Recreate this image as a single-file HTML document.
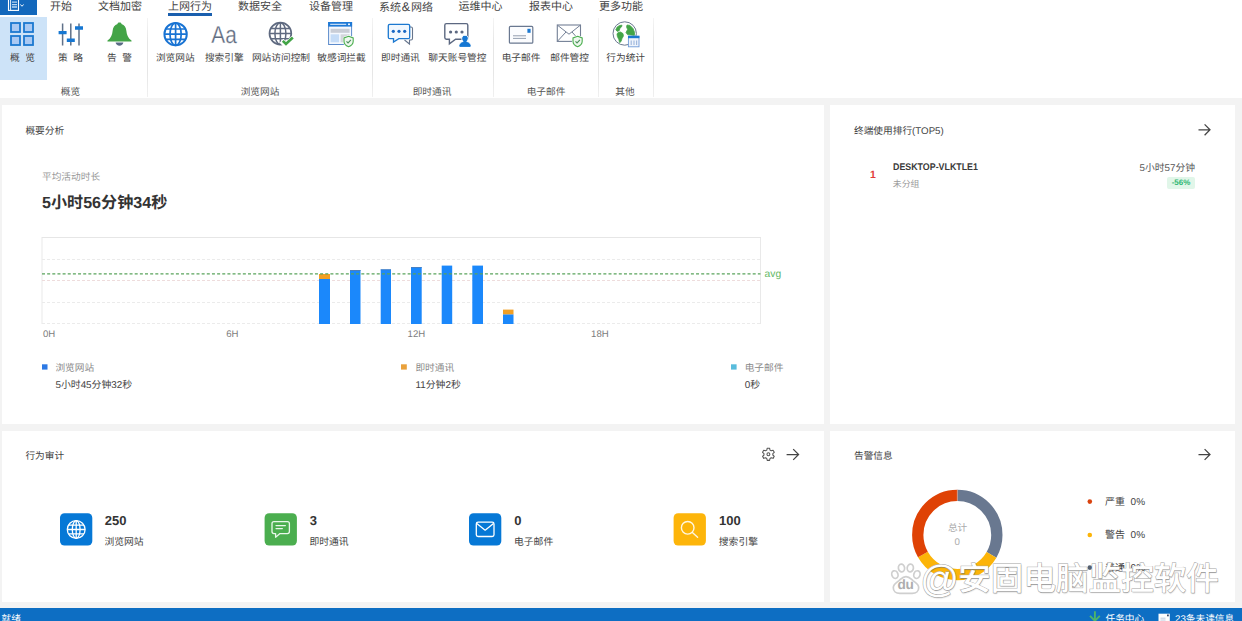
<!DOCTYPE html>
<html lang="zh-CN">
<head>
<meta charset="utf-8">
<title>上网行为 - 概览</title>
<style>
*{box-sizing:border-box;margin:0;padding:0}
html,body{width:1242px;height:621px;overflow:hidden;background:#f3f3f3}
body{position:relative;font-family:"Liberation Sans","Noto Sans CJK SC",sans-serif;color:#444;font-size:9.7px;line-height:1;text-rendering:geometricPrecision}
svg text{text-rendering:geometricPrecision}
.abs{position:absolute}
.t{position:absolute;white-space:nowrap;line-height:1}
.c{transform:translateX(-50%)}
/* ribbon */
#ribbon{position:absolute;left:0;top:0;width:1242px;height:98px;background:#fff}
#appmenu{position:absolute;left:0;top:0;width:37px;height:15px;background:#1368bc}
.tab{position:absolute;top:0.700px;font-size:11px;color:#444;white-space:nowrap;line-height:12px}
.rb{position:absolute;top:53px;font-size:9.7px;color:#444;white-space:nowrap;line-height:12px;transform:translateX(-50%)}
.grp{position:absolute;top:86.5px;font-size:9.7px;color:#555;white-space:nowrap;line-height:12px;transform:translateX(-50%)}
.ws{word-spacing:2.9px}
.sep{position:absolute;top:18px;width:1px;height:79px;background:linear-gradient(#f4f4f4,#e6e6e6 30%,#e6e6e6 70%,#f0f0f0)}
.ico{position:absolute}
/* cards */
.card{position:absolute;background:#fff}
.ttl{position:absolute;margin-top:1.2px;font-size:9.7px;color:#444;white-space:nowrap;line-height:12px}
.num{top:81.500px;font-size:13px;font-weight:bold;color:#333;line-height:16px}
.lab{top:105.700px;font-size:9.800px;color:#444;line-height:12px}
#status{position:absolute;left:0;top:608px;width:1242px;height:13px;background:#0d6ec3;color:#fff}
</style>
</head>
<body>
<div id="ribbon">
  <div id="appmenu"></div>
  <div class="tab" style="left:50px">开始</div>
  <div class="tab" style="left:98px">文档加密</div>
  <div class="tab" style="left:168px">上网行为</div>
  <div class="abs" style="left:168px;top:12.500px;width:44px;height:3px;background:#1a5fae"></div>
  <div class="tab" style="left:238px">数据安全</div>
  <div class="tab" style="left:309px">设备管理</div>
  <div class="tab" style="left:379px">系统<span style="font-size:12.500px;padding:0 0.9px 0 0.8px">&amp;</span>网络</div>
  <div class="tab" style="left:458.5px">运维中心</div>
  <div class="tab" style="left:529px">报表中心</div>
  <div class="tab" style="left:599px">更多功能</div>

  <div class="abs" style="left:0;top:16.500px;width:46.800px;height:63.500px;background:#cde3f8"></div>
  <div class="rb ws" style="left:22.5px">概 览</div>
  <div class="rb ws" style="left:70.5px">策 略</div>
  <div class="rb ws" style="left:119.5px">告 警</div>
  <div class="rb" style="left:175.3px">浏览网站</div>
  <div class="rb" style="left:224.3px">搜索引擎</div>
  <div class="rb" style="left:281px">网站访问控制</div>
  <div class="rb" style="left:341.5px">敏感词拦截</div>
  <div class="rb" style="left:400.4px">即时通讯</div>
  <div class="rb" style="left:457.4px">聊天账号管控</div>
  <div class="rb" style="left:521px">电子邮件</div>
  <div class="rb" style="left:569.6px">邮件管控</div>
  <div class="rb" style="left:625.7px">行为统计</div>

  <div class="grp" style="left:70.5px">概览</div>
  <div class="grp" style="left:260px">浏览网站</div>
  <div class="grp" style="left:432px">即时通讯</div>
  <div class="grp" style="left:546px">电子邮件</div>
  <div class="grp" style="left:625px">其他</div>

  <div class="sep" style="left:147px"></div>
  <div class="sep" style="left:372px"></div>
  <div class="sep" style="left:493px"></div>
  <div class="sep" style="left:598px"></div>
  <div class="sep" style="left:653px"></div>
  <!--ICONS-->
<svg class="abs" style="left:0;top:0" width="700" height="98" viewBox="0 0 700 98" fill="none">
  <!-- app menu -->
  <g stroke="#fff" stroke-width="1.1">
    <rect x="8.5" y="-2" width="10" height="12.4"/>
    <path d="M10.6 -1V10" stroke-width="0.9"/>
    <path d="M12 2.2H17M12 4.6H17M12 7H17" stroke="#b9d6f1" stroke-width="1.3"/>
    <path d="M20.3 4.6L22 6.2L23.7 4.6" stroke-width="1"/>
  </g>
  <!-- overview: 4 squares -->
  <g stroke="#1b78d0" stroke-width="1.8" fill="#a9c9f3">
    <rect x="11" y="23" width="9" height="9"/>
    <rect x="24" y="23" width="9" height="9"/>
    <rect x="11" y="36" width="9" height="9"/>
    <rect x="24" y="36" width="9" height="9"/>
  </g>
  <!-- policy sliders -->
  <g stroke="#5f7189" stroke-width="1.500">
    <path d="M62.6 23.5V45.5M70.8 23.5V45.5M79 23.5V45.5"/>
  </g>
  <g stroke="#1677d2" stroke-width="3.400">
    <path d="M58.6 32.6H66.6M66.8 40.2H74.8M75 28H83"/>
  </g>
  <!-- bell -->
  <path d="M119.5 22.3c-1.1 0-1.9.8-2 1.8c-3 .9-4.600 3.600-4.900 6.800c-.3 3.600-1.400 6.700-5 9.600c-.5.400-.2 1.100.4 1.100h23c.6 0 .9-.7.400-1.100c-3.600-2.900-4.700-6-5-9.600c-.3-3.200-1.900-5.900-4.900-6.800c-.1-1-.9-1.800-2-1.800z" fill="#43a447"/>
  <path d="M115.600 42.600h7.800c-.3 1.900-1.900 3.100-3.900 3.100s-3.600-1.200-3.900-3.100z" fill="#5a6b85"/>
  <!-- globe blue -->
  <g stroke="#1873d3" stroke-width="1.9">
    <circle cx="175.600" cy="34.200" r="11.200"/>
    <ellipse cx="175.600" cy="34.200" rx="5.600" ry="11.200" stroke-width="1.700"/>
    <path d="M175.600 23V45.400M164.400 34.200H186.800M165.600 29H185.600M165.600 39.400H185.600" stroke-width="1.700"/>
  </g>
  <!-- Aa -->
  <text x="211.300" y="43.200" font-family="Liberation Sans, sans-serif" font-size="24.500" fill="#5f6b80" stroke="#fff" stroke-width="0.280" textLength="25.500" lengthAdjust="spacingAndGlyphs">Aa</text>
  <!-- globe grey + check -->
  <g stroke="#5f6a80" stroke-width="1.700">
    <circle cx="280.400" cy="33.600" r="10.900"/>
    <ellipse cx="280.400" cy="33.600" rx="5.500" ry="10.900" stroke-width="1.500"/>
    <path d="M280.400 22.700V44.500M269.500 33.600H291.300M270.700 28.500H290.100M270.700 38.700H290.100" stroke-width="1.500"/>
  </g>
  <path d="M281.500 40.800L286 45.200L294 37.600" stroke="#fff" stroke-width="5.500"/>
  <path d="M282.800 40.900L286 44L292.800 37.600" stroke="#43a447" stroke-width="2.700"/>
  <!-- window + shield -->
  <rect x="328.600" y="22.500" width="23" height="22" fill="#f4f8fe" stroke="#5b8acb" stroke-width="1"/>
  <rect x="328.100" y="22" width="24" height="4.600" fill="#1e79d6"/>
  <path d="M330.200 24.300H346.200" stroke="#eaf3fc" stroke-width="1"/>
  <rect x="348" y="23.500" width="2" height="1.600" fill="#eaf3fc"/>
  <rect x="330.600" y="28.800" width="19" height="4" fill="#c9cdd6"/>
  <rect x="330.600" y="34.300" width="8.500" height="8" fill="#c5dcf7"/>
  <rect x="340.600" y="34.300" width="9" height="8" fill="#d3d6dc"/>
  <g transform="translate(348.600 41.500) scale(0.920) translate(-348.600 -41.500)">
  <path d="M348.600 35.800l5 1.900v3.600c0 2.900-2.100 4.900-5 5.900c-2.900-1-5-3-5-5.900v-3.600z" fill="#fff" stroke="#fff" stroke-width="2.400"/>
  <path d="M348.600 35.800l5 1.900v3.600c0 2.900-2.100 4.900-5 5.900c-2.900-1-5-3-5-5.900v-3.600z" fill="#eef8ee" stroke="#4caf50" stroke-width="1.200"/>
  <path d="M346.300 41.300l1.700 1.700l3.100-3.200" stroke="#4b8f5a" stroke-width="1.200"/>
  </g>
  <!-- IM chat -->
  <path d="M392.500 27h18.500q1.500 0 1.500 1.500v10q0 1.500-1.500 1.500h-1.500v4l-5-4" stroke="#66758c" stroke-width="1.100" fill="#fff"/>
  <path d="M389.800 24.300h18.400q1.500 0 1.500 1.500v11.400q0 1.500-1.500 1.500h-9.400l-5.300 3.400v-3.400h-3.700q-1.500 0-1.500-1.500v-11.400q0-1.500 1.500-1.500z" stroke="#1b78d0" stroke-width="1.300" fill="#f0f7fe"/>
  <g fill="#1767c4"><circle cx="393.300" cy="31.300" r="1.600"/><circle cx="399" cy="31.300" r="1.600"/><circle cx="404.700" cy="31.300" r="1.600"/></g>
  <!-- chat account -->
  <path d="M446.400 23.600h19.800q1.600 0 1.600 1.600v12.400q0 1.600-1.600 1.600h-10.600l-6.200 4.600v-4.600h-3q-1.600 0-1.600-1.600v-12.400q0-1.600 1.600-1.600z" stroke="#5c6881" stroke-width="1.400" fill="#fff"/>
  <g fill="#5c6881"><circle cx="450.600" cy="32" r="1.600"/><circle cx="456.300" cy="32" r="1.600"/><circle cx="462" cy="32" r="1.600"/></g>
  <path d="M465 35.200c2 0 3.300 1.500 3.300 3.300c0 1.300-.6 2.300-1.500 2.900c2.400.6 4 2 4.200 4.300c0 .5-.3.800-.8.800h-10.400c-.5 0-.8-.3-.8-.8c.2-2.300 1.800-3.700 4.200-4.300c-.9-.6-1.500-1.600-1.500-2.900c0-1.800 1.300-3.300 3.300-3.300z" fill="#1577d3" stroke="#fff" stroke-width="1"/>
  <rect x="459.600" y="44.600" width="10.800" height="2.300" fill="#1577d3"/>
  <!-- email card -->
  <rect x="509.400" y="26.400" width="23.400" height="16.800" rx="1" stroke="#6a7890" stroke-width="1.200" fill="#fbfcfe"/>
  <rect x="527.400" y="28.800" width="3.200" height="4" fill="#1b78d0"/>
  <path d="M513 35.800H526M513 38.400H526" stroke="#8893a6" stroke-width="0.900"/>
  <!-- mail control -->
  <rect x="557.300" y="25" width="23.200" height="16.400" stroke="#737f95" stroke-width="1.100" fill="#fff"/>
  <path d="M557.600 25.300L569 34.200L580.200 25.300M557.600 41.100L566 32M580.200 41.100L572 32" stroke="#737f95" stroke-width="1"/>
  <g transform="translate(577.600 41.500) scale(0.920) translate(-577.600 -41.500)">
  <path d="M577.600 35.800l5 1.900v3.600c0 2.900-2.100 4.900-5 5.900c-2.900-1-5-3-5-5.900v-3.600z" fill="#fff" stroke="#fff" stroke-width="2.400"/>
  <path d="M577.600 35.800l5 1.900v3.600c0 2.900-2.100 4.900-5 5.900c-2.900-1-5-3-5-5.900v-3.600z" fill="#eef8ee" stroke="#4caf50" stroke-width="1.200"/>
  <path d="M575.300 41.300l1.700 1.700l3.100-3.200" stroke="#4b8f5a" stroke-width="1.200"/>
  </g>
  <!-- earth stats -->
  <circle cx="624.700" cy="33.500" r="11.700" fill="#fff" stroke="#6a7890" stroke-width="1"/>
  <g fill="#43a447" stroke="#43a447" stroke-width="0.800" stroke-linejoin="round">
  <path d="M615.800 30L617 27.200L619.500 25.500L622 25.200L621.600 26.800L619.800 28.400L619.400 30.400L617.500 31.400z"/>
  <path d="M618.200 32.400L620.500 32L623 33.600L623.400 36L622 38.600L621 41.600L619.600 42.600L618.800 39.500L617.400 36.500L617 34z"/>
  <path d="M627 25L630 25.400L633 28.500L634.600 32.500L634.400 35.500L631 35L627.500 34.600L626 32.500L627.600 29.500L626.600 27z"/>
  </g>
  <rect x="628.400" y="36.200" width="10.600" height="10.600" fill="#eef3fb" stroke="#6f9ad8" stroke-width="0.900"/>
  <rect x="628" y="35.800" width="11.400" height="2.400" fill="#1b78d0"/>
  <path d="M631.200 40.400V45M634 40.400V45M636.600 40.400V45" stroke="#9db6dc" stroke-width="1.100"/>
</svg>
<!--/ICONS-->
</div>

<div class="card" id="c1" style="left:2px;top:105px;width:822px;height:319px">
  <div class="ttl" style="left:23.4px;top:19.5px">概要分析</div>
  <div class="t" style="left:40px;top:66.800px;font-size:9.7px;color:#999;line-height:12px">平均活动时长</div>
  <div class="t" style="left:40px;top:88.400px;font-size:16.100px;font-weight:bold;color:#333;line-height:20px">5小时56分钟34秒</div>
  <!--CHART-->
<svg class="abs" style="left:0;top:0" width="822" height="319" viewBox="2 105 822 319" fill="none" font-family="Liberation Sans, Noto Sans CJK SC, sans-serif">
  <!-- frame -->
  <path d="M41.500 237.500H761" stroke="#e6e6e6" stroke-width="1"/>
  <path d="M42 238V324M760.500 238V324" stroke="#e9e9e9" stroke-width="1"/>
  <g stroke="#ebebeb" stroke-width="1" stroke-dasharray="3 2">
    <path d="M42 259.500H760"/>
    <path d="M42 280.500H760" stroke="#eedcdc"/>
    <path d="M42 302.500H760"/>
    <path d="M42 323.500H760"/>
  </g>
  <!-- bars -->
  <g fill="#1b88fb">
    <rect x="319" y="279" width="11" height="45"/>
    <rect x="350" y="270" width="10.500" height="54"/>
    <rect x="380.700" y="269.400" width="10.300" height="54.600"/>
    <rect x="411" y="267" width="10.700" height="57"/>
    <rect x="441.700" y="265.600" width="10.500" height="58.400"/>
    <rect x="472.300" y="265.600" width="10.700" height="58.400"/>
    <rect x="503" y="314.300" width="10.500" height="9.700"/>
  </g>
  <g fill="#f3a024">
    <rect x="319" y="274" width="11" height="5"/>
    <rect x="503" y="309.600" width="10.500" height="4.700"/>
  </g>
  <g fill="#4f7fb8">
    <rect x="350" y="270" width="10.500" height="1"/>
    <rect x="380.700" y="269.400" width="10.300" height="0.800"/>
    <rect x="411" y="267" width="10.700" height="0.800"/>
  </g>
  <!-- avg -->
  <path d="M42 273.800H760.500" stroke="#5aa45c" stroke-width="1.300" stroke-dasharray="3 2.150"/>
  <text x="764.600" y="276.900" font-size="10.300" fill="#62b866">avg</text>
  <!-- axis labels -->
  <g font-size="9.600" fill="#7d7d7d">
    <text x="43" y="337.300">0H</text>
    <text x="226.200" y="337.300">6H</text>
    <text x="407.600" y="337.300">12H</text>
    <text x="591.100" y="337.300">18H</text>
  </g>
  <!-- legend -->
  <rect x="42" y="364.300" width="5.500" height="5.300" fill="#2c79e4"/>
  <rect x="401" y="364.300" width="5.800" height="5.300" fill="#e9a13b"/>
  <rect x="731" y="364.300" width="5.600" height="5.300" fill="#59bcdc"/>
  <g font-size="9.700" fill="#8a8a8a">
    <text x="55.400" y="371">浏览网站</text>
    <text x="415.400" y="371">即时通讯</text>
    <text x="744.700" y="371">电子邮件</text>
  </g>
  <g font-size="9.900" fill="#444">
    <text x="55.400" y="388">5小时45分钟32秒</text>
    <text x="415.400" y="388">11分钟2秒</text>
    <text x="744.700" y="388">0秒</text>
  </g>
</svg>
<!--/CHART-->
</div>

<div class="card" id="c2" style="left:830px;top:105px;width:405px;height:319px">
  <div class="ttl" style="left:24px;top:19.5px">终端使用排行(TOP5)</div>
  <!--C2-->
  <div class="t" style="left:40px;top:64px;font-size:10.5px;font-weight:bold;color:#e23c39;line-height:12px">1</div>
  <div class="t" style="left:62.800px;top:57px;font-size:9.700px;font-weight:bold;color:#3a3a3a;line-height:12px;transform:scaleX(0.914);transform-origin:0 0">DESKTOP-VLKTLE1</div>
  <div class="t" style="left:62.800px;top:72.500px;font-size:8.900px;color:#999;line-height:12px">未分组</div>
  <div class="t" style="right:40px;top:58px;font-size:9.800px;color:#555;line-height:12px">5小时57分钟</div>
  <div class="abs" style="left:337.300px;top:71.800px;width:27.400px;height:12.200px;background:#e1f6e9;border-radius:2px"></div>
  <div class="t" style="left:337.300px;width:27.400px;text-align:center;top:72px;font-size:8px;font-weight:bold;color:#2fb672;line-height:12px">-56%</div>
  <svg class="abs" style="left:0;top:0" width="405" height="60" viewBox="830 105 405 60" fill="none" stroke="#444" stroke-width="1.250"><path d="M1198.500 129.800H1209.800M1204.600 124.400L1210 129.800L1204.600 135.200"/></svg>
<!--/C2-->
</div>

<div class="card" id="c3" style="left:2px;top:431px;width:822px;height:171px">
  <div class="ttl" style="left:23.4px;top:18.5px">行为审计</div>
  <!--C3-->
  <svg class="abs" style="left:0;top:0" width="822" height="171" viewBox="2 431 822 171" fill="none">
    <!-- gear -->
    <g stroke="#555" stroke-width="1.050" stroke-linejoin="round">
      <path d="M766.79 450.10L767.22 448.21L769.58 448.21L770.01 450.10L771.23 450.80L773.08 450.23L774.26 452.28L772.84 453.60L772.84 455.00L774.26 456.32L773.08 458.37L771.23 457.80L770.01 458.50L769.58 460.39L767.22 460.39L766.79 458.50L765.57 457.80L763.72 458.37L762.54 456.32L763.96 455.00L763.96 453.60L762.54 452.28L763.72 450.23L765.57 450.80z"/>
      <circle cx="768.4" cy="454.3" r="1.450"/>
    </g>
    <path d="M786.600 454.500H798.400M793.200 449.100L798.600 454.500L793.200 459.900" stroke="#444" stroke-width="1.250"/>
    <!-- tiles -->
    <rect x="60" y="513.300" width="32.300" height="32.300" rx="4.500" fill="#0678d6"/>
    <rect x="264.600" y="513.300" width="32.300" height="32.300" rx="4.500" fill="#4bae4f"/>
    <rect x="469" y="513.300" width="32.300" height="32.300" rx="4.500" fill="#0678d6"/>
    <rect x="673.600" y="513.300" width="32.300" height="32.300" rx="4.500" fill="#fdb50a"/>
    <!-- globe -->
    <g stroke="#fff" stroke-width="1.300">
      <circle cx="76.200" cy="529.500" r="8.900"/>
      <ellipse cx="76.200" cy="529.500" rx="3.900" ry="8.900"/>
      <path d="M76.200 520.600V538.400M67.300 529.500H85.100M68.400 525.200H84M68.400 533.800H84"/>
    </g>
    <!-- chat -->
    <g stroke="#e9f7ea" stroke-width="1.300" stroke-linejoin="round" stroke-linecap="round">
      <path d="M274 521.600h13.400q2 0 2 2v8q0 2-2 2h-7.400l-4.400 3.600v-3.600h-1.600q-2 0-2-2v-8q0-2 2-2z"/>
      <path d="M276 525.600H285.400M276 528.600H282.400" stroke-width="1.200"/>
    </g>
    <!-- mail -->
    <g stroke="#fff" stroke-width="1.300" stroke-linejoin="round">
      <rect x="476.300" y="522.200" width="17.700" height="14.300" rx="1.800"/>
      <path d="M476.800 523.400L485.150 530.200L493.500 523.400"/>
    </g>
    <!-- search -->
    <g stroke="#fff7e0" stroke-width="1.400" stroke-linecap="round">
      <circle cx="687.700" cy="527.800" r="6.300"/>
      <path d="M692.400 532.500L697.600 537.300"/>
    </g>
  </svg>
  <div class="t num" style="left:102.800px">250</div>
  <div class="t num" style="left:307.800px">3</div>
  <div class="t num" style="left:512.200px">0</div>
  <div class="t num" style="left:717.100px">100</div>
  <div class="t lab" style="left:102.400px">浏览网站</div>
  <div class="t lab" style="left:307.400px">即时通讯</div>
  <div class="t lab" style="left:512px">电子邮件</div>
  <div class="t lab" style="left:716.800px">搜索引擎</div>
<!--/C3-->
</div>

<div class="card" id="c4" style="left:830px;top:431px;width:405px;height:171px">
  <div class="ttl" style="left:24px;top:18.5px">告警信息</div>
  <!--C4-->
  <svg class="abs" style="left:0;top:0" width="405" height="171" viewBox="830 431 405 171" fill="none" font-family="Liberation Sans, Noto Sans CJK SC, sans-serif">
    <path d="M1198.500 454.500H1209.800M1204.600 449.100L1210 454.500L1204.600 459.900" stroke="#444" stroke-width="1.250"/>
    <g stroke-width="11.300" transform="rotate(-90 957.300 535)">
      <circle cx="957.300" cy="535" r="39.55" stroke="#697890" stroke-dasharray="82.833 165.667"/>
      <circle cx="957.300" cy="535" r="39.55" stroke="#fcb408" stroke-dasharray="82.833 165.667" stroke-dashoffset="-82.833"/>
      <circle cx="957.300" cy="535" r="39.55" stroke="#df4205" stroke-dasharray="82.833 165.667" stroke-dashoffset="-165.667"/>
    </g>
    <path d="M957.300 489.800V501.100" stroke="#e9b7a0" stroke-width="0.500"/>
    <text x="957.600" y="531.400" font-size="9.700" fill="#ababab" text-anchor="middle">总计</text>
    <text x="957.200" y="545.200" font-size="9.700" fill="#ababab" text-anchor="middle">0</text>
    <circle cx="1089.800" cy="501.600" r="2.300" fill="#d9430f"/>
    <circle cx="1089.800" cy="535" r="2.300" fill="#fcb408"/>
    <circle cx="1089.800" cy="567.600" r="2.300" fill="#55606f"/>
    <g font-size="10" fill="#444">
      <text x="1105" y="505">严重</text><text x="1130.600" y="505">0%</text>
      <text x="1105" y="538.200">警告</text><text x="1130.600" y="538.200">0%</text>
      <text x="1105" y="570.800">普通</text><text x="1130.600" y="570.800">0%</text>
    </g>
  </svg>
<!--/C4-->
</div>

<div id="status">
  <div class="t" style="left:1.5px;top:5.600px;font-size:9.7px;line-height:12px">就绪</div>
  <div class="t" style="left:1105.5px;top:5.600px;font-size:9.7px;line-height:12px">任务中心</div>
  <div class="t" style="left:1175px;top:5.600px;font-size:9.7px;line-height:12px">23条未读信息</div>
  <!--STATUSICONS-->
</div>
<!--WATERMARK-->
<svg class="abs" style="left:0;top:0" width="1242" height="621" viewBox="0 0 1242 621" fill="none">
  <!-- status icons -->
  <g stroke="#4db56a" stroke-width="1.900">
    <path d="M1094.900 611.300V621M1090 615.800L1094.900 620.800L1099.800 615.800"/>
  </g>
  <rect x="1158.500" y="613.700" width="11.300" height="9" fill="#fdfdfd"/>
  <rect x="1167" y="614.500" width="1.800" height="1.800" fill="#3b4a66"/>
  <path d="M1160.500 618.200H1165.500M1160.500 620H1165.500" stroke="#b6c6dc" stroke-width="0.900"/>
  <!-- watermark paw -->
  <g fill="#fff" stroke="#cdcdcd" stroke-width="1.700" opacity="0.950">
    <ellipse cx="894.900" cy="574.600" rx="3.100" ry="3.900" transform="rotate(-18 894.900 574.600)"/>
    <ellipse cx="901.500" cy="568" rx="3.100" ry="3.900" transform="rotate(-6 901.500 568)"/>
    <ellipse cx="910.300" cy="568" rx="3.100" ry="3.900" transform="rotate(6 910.300 568)"/>
    <ellipse cx="916.900" cy="574.600" rx="3.100" ry="3.900" transform="rotate(18 916.900 574.600)"/>
    <path d="M906 576.600c3.300 0 4.800 2.200 7 4c2.600 2 5.700 3.400 5.700 7.100c0 3.500-2.700 5.700-6.500 5.700h-12.400c-3.800 0-6.500-2.200-6.500-5.700c0-3.700 3.100-5.100 5.700-7.100c2.200-1.800 3.700-4 7-4z"/>
  </g>
</svg>
<div class="t" style="left:897.500px;top:578.400px;font-size:13.600px;font-weight:bold;color:#adadad;line-height:14px;letter-spacing:-0.3px">du</div>
<div class="t" id="wm" style="left:922.800px;top:558.600px;font-size:32.600px;line-height:40px;font-weight:500;color:#fff;-webkit-text-stroke:0.9px #a6a6a6;paint-order:stroke fill;text-shadow:0.5px 0.7px 1.200px rgba(0,0,0,.22)"><span style="font-size:38px;line-height:40px;display:inline-block;vertical-align:top;margin:1.300px -0.500px 0 -2.600px">@</span>安固电脑监控软件</div>
<!--/WATERMARK-->
</body>
</html>
